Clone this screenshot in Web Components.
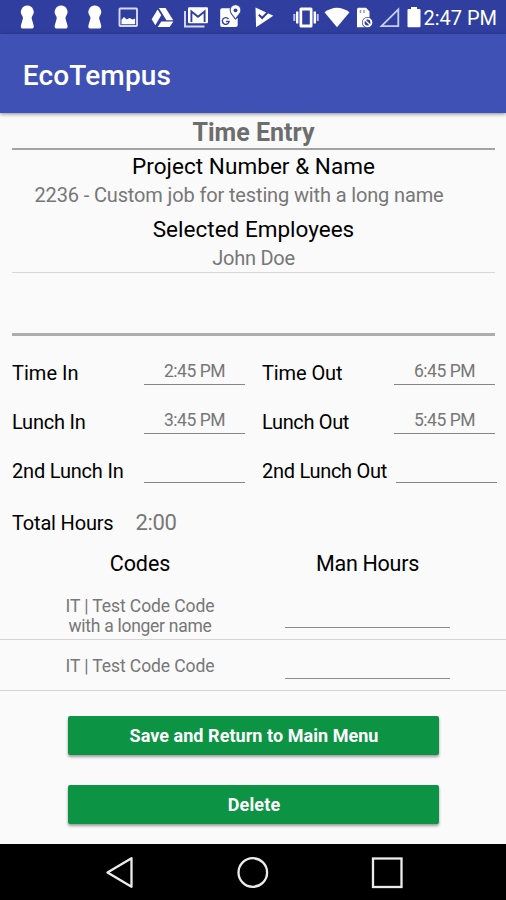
<!DOCTYPE html>
<html lang="en">
<head>
<meta charset="utf-8">
<title>EcoTempus</title>
<style>
body{margin:0;background:#fafafa;font-family:Roboto,"Liberation Sans",sans-serif;overflow:hidden}
</style>
</head>
<body>
<eco-screen></eco-screen>
<script>
const make=(name,html,setup)=>customElements.define(name,class extends HTMLElement{
  connectedCallback(){
    if(this.shadowRoot)return;
    const t=document.createElement('template');
    t.innerHTML=typeof html==='function'?html(this):html;
    this.attachShadow({mode:'open'}).append(t.content.cloneNode(true));
    if(setup)setup(this);
  }
});

/* One line of text: size, row height, and the advance width its letters are spaced to fill. */
make('fit-text',el=>`<style>
:host{display:block;white-space:nowrap;color:#000;font-size:${el.getAttribute('size')}px;line-height:${el.getAttribute('row')}px;height:${el.getAttribute('row')}px}
:host([tone=grey]){color:#777}
:host([tone=white]){color:#fff}
:host([align=center]){text-align:center}
span{display:inline-block}
</style><span><slot></slot></span>`,el=>{
  const s=el.shadowRoot.querySelector('span'),w=+el.getAttribute('fit');
  const n=s.firstChild.assignedNodes({flatten:true}).map(x=>x.textContent).join('').trim().length;
  if(w&&n)s.style.letterSpacing=(w-s.getBoundingClientRect().width)/n+'px';
});

const person='<path fill="#fff" d="M27.300 5.500a6.400 6.400 0 0 1 5 10.400q-.9 1.200-.5 3l1.900 6.700q.4 3-1.400 3h-10q-1.800 0-1.400-3l1.900-6.700q.4-1.800-.5-3a6.400 6.400 0 0 1 5-10.400z"/>';
const icons={
  person:[20,34,person],
  person2:[54,34,`<g transform="translate(33.800)">${person}</g>`],
  person3:[88,23,`<g transform="translate(67.500)">${person}</g>`],
  image:[111,33,'<rect x="119.500" y="8.500" width="17.500" height="17.500" rx=".8" fill="none" stroke="#d5daf5" stroke-width="1.900"/><path fill="#fff" d="M121.500 24.300v-4.600l2.500-2.700 2.800 2.600 2.700-1.600 3 1.600 2.600-1.200v5.900z"/>'],
  drive:[144,38,'<g fill="#fff"><path d="M158.800 8h6.800l7.600 12.300h-6.700z"/><path d="M157.600 9.500l3.600 5.700-5.900 10-3.600-5.900z"/><path d="M161.300 21.500h12l-3.600 5.500h-12z"/></g>'],
  gmail:[182,33,'<path fill="none" stroke="#d5daf5" stroke-width="1.900" d="M185 11v15.500h19.500"/><rect x="188" y="7.300" width="20" height="16" rx="1.200" fill="#fff"/><path fill="none" stroke="#303f9f" stroke-width="1.900" d="M191.400 22V11.500l6.600 5.300 6.600-5.300V22"/>'],
  maps:[215,35,'<path fill="#fff" d="M222 8.300h8c-.8 3.700 1 6.300 5.500 11.500l2.200-2V25q0 2-2 2H222q-1.800 0-1.800-2V10.200q0-1.900 1.800-1.900z"/><path fill="none" stroke="#303f9f" stroke-width="1.400" d="M228.500 19a3.400 3.400 0 1 0 .6 2.500h-3"/><path fill="#fff" stroke="#303f9f" stroke-width=".8" d="M235.500 4.800a5.300 5.300 0 0 1 5.300 5.300c0 3.200-2.800 4.800-5.300 9-2.500-4.200-5.300-5.800-5.300-9a5.300 5.300 0 0 1 5.300-5.300z"/><circle cx="235.500" cy="10.300" r="1.900" fill="#303f9f"/>'],
  check:[250,40,'<path fill="#fff" d="M255.500 7.500l17.800 8.300-17.200 11.500z"/><path fill="none" stroke="#303f9f" stroke-width="2" d="M258.800 14.700l3.400 3.300 7.200-7.500"/>'],
  vibrate:[290,33,'<g fill="#fff"><rect x="299.500" y="7.500" width="13" height="20" rx="1.500"/><path d="M296 11.500h2.400v12H296zM313.600 11.500h2.400v12h-2.400z"/><path fill="#bcc3ea" d="M293.300 14h2v7h-2zM316.700 14h2v7h-2z"/></g><rect x="302.200" y="10.500" width="7.600" height="14" fill="#303f9f"/>'],
  wifi:[323,29,'<path fill="#fff" d="M337 27.200L324.500 12.200q12.500-9 25 0z"/>'],
  sim:[352,26,'<path fill="#fff" d="M358 7.800h8l3.500 3.600v15.800H357V9z"/><path stroke="#8f98d0" stroke-width="1.500" d="M360.500 10v3M364 10v3"/><circle cx="367.500" cy="22.500" r="5.500" fill="#303f9f"/><circle cx="367.500" cy="22.500" r="3.900" fill="none" stroke="#fff" stroke-width="1.900"/><path stroke="#fff" stroke-width="1.300" d="M365 20l5 5"/>'],
  signal:[378,24,'<path fill="none" stroke="#c9cff0" stroke-width="1.800" d="M398.300 9.300v16.800h-16.800z"/>'],
  battery:[402,22,'<path fill="#fff" d="M411 7h6v2h2.500q1 0 1 1v16.300q0 1-1 1h-11q-1 0-1-1V10q0-1 1-1H411z"/>']
};
make('status-icon',el=>{const[x,w,g]=icons[el.getAttribute('name')];
return `<style>:host,svg{display:block}</style><svg width="${w}" height="34" viewBox="${x} 0 ${w} 34">${g}</svg>`});

make('status-bar',`<style>:host{display:flex;height:34px;background:#303f9f;padding-left:20px}
fit-text{margin-top:2px;margin-left:-.500px}</style>
${Object.keys(icons).map(k=>`<status-icon name="${k}"></status-icon>`).join('')}
<fit-text size="20" row="33" fit="73.500" tone="white">2:47 PM</fit-text>`);

make('app-bar',`<style>:host{display:block;position:relative;height:78.500px;background:#3f51b5;box-shadow:0 1px 4px rgba(0,0,0,.45);padding-left:22.700px;box-sizing:border-box;font-weight:500}
fit-text{padding-top:1.500px}</style><fit-text size="28" row="79" fit="148.500" tone="white"><slot></slot></fit-text>`);

make('entry-header',`<style>:host{display:block;margin:0 11px 0 12px;padding-top:3.500px}
.t{border-bottom:2px solid #a3a3a3;font-weight:700;height:32px}
.t fit-text{color:#6d6d6d}
.job{padding-right:29px;margin-bottom:5px}
.who{border-bottom:1px solid #d8d8d8}
.blank{height:60px;border-bottom:3px solid #adadad}</style>
<div class="t"><fit-text size="25" row="34" fit="122" align="center">Time Entry</fit-text></div>
<fit-text size="22.500" row="33" fit="243" align="center">Project Number &amp; Name</fit-text>
<fit-text class="job" size="20" row="25" fit="409" align="center" tone="grey">2236 - Custom job for testing with a long name</fit-text>
<fit-text size="22.500" row="32" fit="201.500" align="center">Selected Employees</fit-text>
<div class="who"><fit-text size="20" row="27" fit="82.500" align="center" tone="grey">John Doe</fit-text></div>
<div class="blank"></div>`);

make('time-field',el=>`<style>:host{display:grid;grid-template-columns:131.500px 101px;height:25px}
:host([shift]){grid-template-columns:133.500px 101px}
.v{border-bottom:1.500px solid #858585;box-sizing:border-box;height:25px;padding-left:1px}</style>
<fit-text size="20" row="26" fit="${el.getAttribute('fit')}">${el.getAttribute('label')}</fit-text>
<div class="v">${el.getAttribute('value')?`<fit-text size="17.500" row="22" fit="61" align="center" tone="grey">${el.getAttribute('value')}</fit-text>`:''}</div>`);

make('time-grid',`<style>:host{display:grid;grid-template-columns:250px 235px;row-gap:24px;padding:24px 0 0 12px}
</style>
<time-field label="Time In" fit="66.500" value="2:45 PM"></time-field><time-field label="Time Out" fit="80.500" value="6:45 PM"></time-field>
<time-field label="Lunch In" fit="73.500" value="3:45 PM"></time-field><time-field label="Lunch Out" fit="87" value="5:45 PM"></time-field>
<time-field label="2nd Lunch In" fit="111.500"></time-field><time-field shift label="2nd Lunch Out" fit="125"></time-field>`);

make('total-hours',`<style>:host{display:flex;gap:22px;padding:27px 0 0 12px;height:26px}</style>
<fit-text size="20" row="26" fit="101.500">Total Hours</fit-text><fit-text size="22" row="26" fit="41" tone="grey">2:00</fit-text>`);

make('code-row',`<style>:host{display:grid;grid-template-columns:280px 165px;column-gap:5px;border-bottom:1px solid #d4d4d4;box-sizing:border-box}
i{border-bottom:1.500px solid #8c8c8c;margin-bottom:11px}</style><div><slot></slot></div><i></i>`);

make('code-table',`<style>:host{display:block;padding-top:14px}
.head{display:grid;grid-template-columns:280px 175px}
.a{height:62px;padding-top:17.500px}.b{height:51px;padding-top:16px}</style>
<div class="head"><fit-text size="21.500" row="28" fit="60.500" align="center">Codes</fit-text><fit-text size="21.500" row="28" fit="103" align="center">Man Hours</fit-text></div>
<code-row class="a"><fit-text size="17.500" row="20" fit="149" align="center" tone="grey">IT | Test Code Code</fit-text><fit-text size="17.500" row="20" fit="143" align="center" tone="grey">with a longer name</fit-text></code-row>
<code-row class="b"><fit-text size="17.500" row="20" fit="149" align="center" tone="grey">IT | Test Code Code</fit-text></code-row>`);

make('action-button',el=>`<style>:host{display:block;height:39.500px;background:#0c9444;border-radius:2px;box-shadow:0 2px 3px rgba(0,0,0,.38);font-weight:700}
fit-text{padding-left:1px}</style>
<fit-text size="18" row="40" fit="${el.getAttribute('fit')}" align="center" tone="white"><slot></slot></fit-text>`);

make('nav-bar',`<style>:host{display:block;background:#000;height:56px}svg{display:block}</style>
<svg width="506" height="56" viewBox="0 844 506 56" fill="none" stroke="#ececec" stroke-width="2.300"><path stroke-linejoin="round" d="M107.500 872.500l24-14.300v28.600z"/><circle cx="252.800" cy="872.500" r="14.300"/><rect x="373" y="858.500" width="28.500" height="28.500"/></svg>`);

make('eco-screen',`<style>:host{display:flex;flex-direction:column;height:900px;width:506px}
.actions{display:grid;gap:29.500px;margin:24.500px 67px 0 68px}
nav-bar{margin-top:auto}</style>
<status-bar></status-bar><app-bar>EcoTempus</app-bar><entry-header></entry-header><time-grid></time-grid>
<total-hours></total-hours><code-table></code-table>
<div class="actions"><action-button fit="249">Save and Return to Main Menu</action-button><action-button fit="52.500">Delete</action-button></div>
<nav-bar></nav-bar>`);
</script>
</body>
</html>
